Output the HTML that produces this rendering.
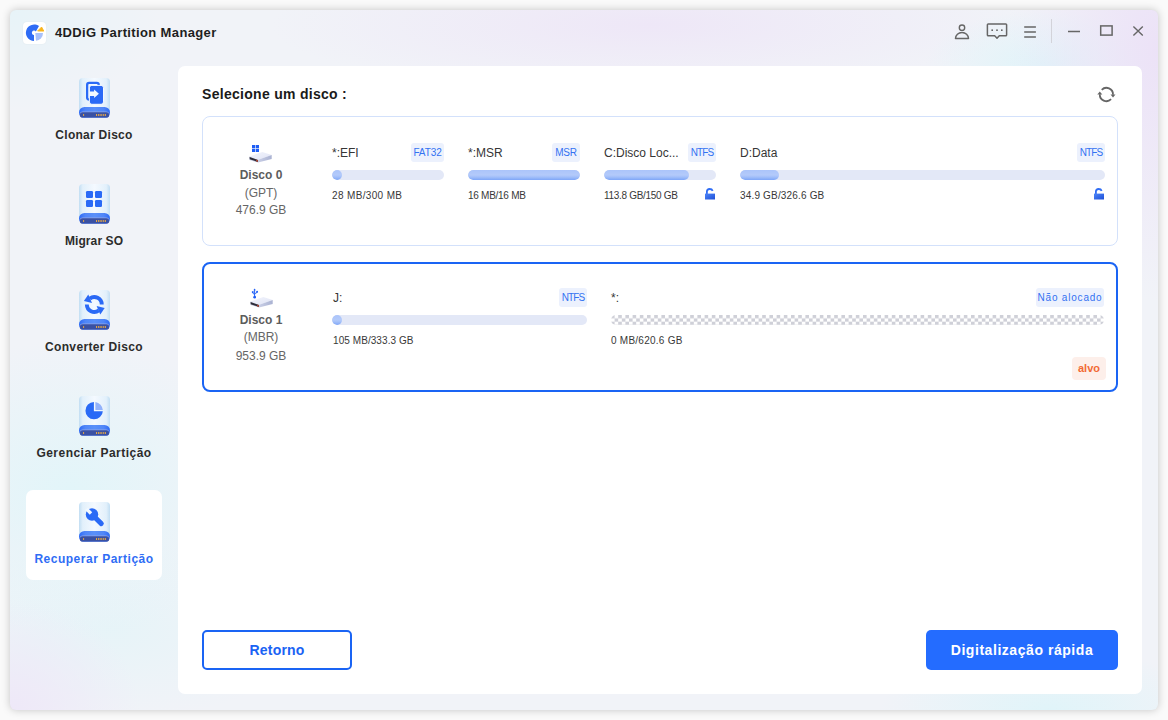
<!DOCTYPE html>
<html><head><meta charset="utf-8">
<style>
*{box-sizing:border-box;margin:0;padding:0}
html,body{width:1168px;height:720px;overflow:hidden;background:#fafafa;font-family:"Liberation Sans",sans-serif;}
.abs{position:absolute}
svg{position:absolute;overflow:visible}
.win{position:absolute;left:10px;top:10px;width:1148px;height:700px;border-radius:6px;
 box-shadow:0 0 9px rgba(0,0,0,.22);overflow:hidden;
 background:
  radial-gradient(ellipse 150px 250px at 1148px 40px,rgba(236,226,247,1),rgba(236,226,247,0)),
  radial-gradient(ellipse 120px 55px at 1035px 55px,rgba(224,244,249,1),rgba(224,244,249,0)),
  radial-gradient(ellipse 380px 70px at 640px 15px,rgba(238,231,247,1),rgba(238,231,247,0)),
  radial-gradient(ellipse 170px 60px at 1040px 700px,rgba(224,244,249,1),rgba(224,244,249,0)),
  radial-gradient(ellipse 130px 110px at 0px 700px,rgba(238,232,248,1),rgba(238,232,248,0)),
  radial-gradient(ellipse 200px 150px at 60px 480px,rgba(226,245,249,1),rgba(226,245,249,0)),
  radial-gradient(ellipse 200px 90px at 100px 620px,rgba(228,244,248,.8),rgba(228,244,248,0)),
  radial-gradient(ellipse 150px 100px at 0px 0px,rgba(230,243,248,.9),rgba(230,243,248,0)),
  #f1f3f8}
.panel{position:absolute;left:168px;top:56px;width:964px;height:628px;background:#fff;border-radius:7px}
.t{position:absolute;white-space:nowrap;line-height:1}
.navlbl{position:absolute;left:0;width:168px;text-align:center;font-weight:bold;font-size:12px;color:#2c2c2c;white-space:nowrap;line-height:1}
.nicon{position:absolute;left:69px;width:31px;height:40px}
.card{position:absolute;left:24px;width:916px;border-radius:8px;background:#fff}
.badge{position:absolute;height:19px;border-radius:3px;background:#ecf1fd;color:#3372f2;font-size:10px;line-height:19px;text-align:center;white-space:nowrap}
.bar{position:absolute;height:10px;border-radius:5px;background:#e3e8f7;overflow:hidden}
.fill{position:absolute;left:0;top:0;height:10px;border-radius:5px;background:linear-gradient(180deg,#abc4fa 0%,#b3cafa 50%,#a2bff9 70%,#7ea6f8 100%)}
.pname{position:absolute;font-size:12px;color:#363636;white-space:nowrap;line-height:1}
.psize{position:absolute;font-size:10px;color:#383838;white-space:nowrap;line-height:1}
.dname{position:absolute;left:33px;width:100px;text-align:center;font-size:12px;font-weight:bold;color:#5c5c5c;line-height:1;white-space:nowrap}
.dsub{position:absolute;left:33px;width:100px;text-align:center;font-size:12px;color:#666;line-height:1;white-space:nowrap}
.chk{position:absolute;height:10px;overflow:hidden;border-radius:5px;background:#fff}
</style></head>
<body>
<svg width="0" height="0" style="position:absolute">
 <defs>
  <linearGradient id="ib" x1="0" x2="1" y1="0" y2="0">
   <stop offset="0" stop-color="#c2def3"/>
   <stop offset=".12" stop-color="#e2f0fb"/>
   <stop offset=".5" stop-color="#f4f9ff"/>
   <stop offset=".88" stop-color="#e2f0fb"/>
   <stop offset="1" stop-color="#c2def3"/>
  </linearGradient>
  <linearGradient id="band" x1="0" x2="1" y1="0" y2="0">
   <stop offset="0" stop-color="#2c69f5"/>
   <stop offset=".2" stop-color="#4f86f8"/>
   <stop offset=".5" stop-color="#5a90f9"/>
   <stop offset=".8" stop-color="#4f86f8"/>
   <stop offset="1" stop-color="#2c69f5"/>
  </linearGradient>
  <symbol id="base" viewBox="0 0 31 40">
   <path d="M0 4 Q0 0 4 0 H27 Q31 0 31 4 V34 H0Z" fill="url(#ib)"/>
   <rect x="0" y="29" width="31" height="11" rx="5.5" fill="url(#band)"/>
   <rect x="0.8" y="33.6" width="29.4" height="6" rx="3" fill="#8fa5e8"/>
   <rect x="0.9" y="34.2" width="29.2" height="5.4" rx="2.7" fill="#3a51a3"/>
   <rect x="4.1" y="36" width="1" height="2" fill="#e2a548"/>
   <rect x="17" y="36" width="1" height="2" fill="#e2a548"/>
   <rect x="18.9" y="36" width="1" height="2" fill="#e2a548"/>
   <rect x="20.6" y="36" width="1" height="2" fill="#e2a548"/>
   <rect x="22.3" y="36" width="1" height="2" fill="#e2a548"/>
   <rect x="24.2" y="36" width="1" height="2" fill="#e2a548"/>
   <rect x="25.9" y="36" width="1" height="2" fill="#e2a548"/>
  </symbol>
  <linearGradient id="drtop" x1="0" x2="1" y1="0" y2="1">
   <stop offset="0" stop-color="#f3f5fc"/>
   <stop offset="1" stop-color="#dfe3f5"/>
  </linearGradient>
  <linearGradient id="drside" x1="0" x2="1" y1="0" y2="0">
   <stop offset="0" stop-color="#c9cfe6"/>
   <stop offset="1" stop-color="#aab2d2"/>
  </linearGradient>
  <symbol id="drive" viewBox="0 0 23 12">
   <path d="M0.3 4.5 L13.3 0 L22.7 3 L9 7.8 Z" fill="url(#drtop)"/>
   <path d="M0.3 4.5 L9 7.8 L9 10.5 L0.5 7.9 Z" fill="#c9cde3"/>
   <path d="M0.6 5 L9 8.1 L9 9.9 L0.7 7.3 Z" fill="#2b2b38"/>
   <path d="M9 7.8 L22.7 3 L22.7 7 L9 10.5 Z" fill="url(#drside)"/>
   <path d="M7 7.6 L9 8.3 L9 9.9 L7 9.2Z" fill="#a54634"/>
  </symbol>
  <linearGradient id="lockg" x1="0" x2="1" y1="0" y2="1">
   <stop offset="0" stop-color="#4f86f7"/>
   <stop offset="1" stop-color="#1d4fd8"/>
  </linearGradient>
  <symbol id="lock" viewBox="0 0 10 12">
   <path d="M1.9 6 V3.4 Q1.9 1 4.6 1 Q6.9 1 7.7 2.9" fill="none" stroke="#2f6df5" stroke-width="1.8"/>
   <rect x="0" y="5.6" width="10" height="5.9" fill="url(#lockg)"/>
  </symbol>
 </defs>
</svg>
<div class="win">
 <!-- logo -->
 <div class="abs" style="left:13px;top:12px;width:23px;height:22px;background:#fff;border-radius:4px;box-shadow:0 0 1.5px rgba(0,0,0,.07)"></div>
 <svg style="left:13px;top:12px" width="23" height="22" viewBox="0 0 23 22">
  <path d="M16 4.1 A8.25 8.25 0 1 0 11 19 L11 13 A2.2 2.2 0 1 1 12.9 9.6 Z" fill="#2f6cf5"/>
  <path d="M12.3 11 H20 A7.6 7.6 0 0 1 13 18.7 Z" fill="#a8c1fb"/>
  <path d="M18.6 5 L14.6 9 L20.8 9.1 Z" fill="#f9b51c" stroke="#f9b51c" stroke-width="0.9" stroke-linejoin="round"/>
 </svg>
 <div class="t" style="left:45px;top:15.6px;font-size:13px;font-weight:bold;color:#1e1e1e;letter-spacing:.37px">4DDiG Partition Manager</div>

 <!-- title bar icons -->
 <svg style="left:940px;top:10px" width="30" height="32" viewBox="0 0 30 32">
  <circle cx="12" cy="7.7" r="2.7" fill="none" stroke="#666" stroke-width="1.4"/>
  <path d="M5.5 18.5 A6.5 6 0 0 1 18.5 18.5 Z" fill="none" stroke="#666" stroke-width="1.5" stroke-linejoin="round"/>
 </svg>
 <svg style="left:970px;top:10px" width="40" height="32" viewBox="0 0 40 32">
  <path d="M8.2 4 H25.8 Q26.6 4 26.6 4.8 V15 Q26.6 15.8 25.8 15.8 H19.3 L17 18.2 L14.7 15.8 H8.2 Q7.4 15.8 7.4 15 V4.8 Q7.4 4 8.2 4Z" fill="none" stroke="#666" stroke-width="1.5" stroke-linejoin="round"/>
  <rect x="11.4" y="9.4" width="1.6" height="1.6" fill="#666"/>
  <rect x="16.2" y="9.4" width="1.6" height="1.6" fill="#666"/>
  <rect x="21" y="9.4" width="1.6" height="1.6" fill="#666"/>
 </svg>
 <svg style="left:1010px;top:10px" width="30" height="32" viewBox="0 0 30 32">
  <path d="M4.2 7 H15.9 M4.2 12 H15.9 M4.2 17 H15.9" stroke="#666" stroke-width="1.5"/>
 </svg>
 <div class="abs" style="left:1041px;top:9px;width:1px;height:24px;background:#d3d3da"></div>
 <svg style="left:1050px;top:10px" width="100" height="32" viewBox="0 0 100 32">
  <path d="M8 11.5 H20" stroke="#666" stroke-width="1.4"/>
  <rect x="40.7" y="5.9" width="11.4" height="9.2" fill="none" stroke="#666" stroke-width="1.5"/>
  <path d="M73.4 6.4 L82.8 15.6 M82.8 6.4 L73.4 15.6" stroke="#666" stroke-width="1.4"/>
 </svg>

 <!-- sidebar -->
 <div class="abs" style="left:16px;top:480px;width:136px;height:90px;background:#fff;border-radius:7px"></div>
 <svg class="nicon" style="top:68px" viewBox="0 0 31 40"><use href="#base"/>
  <rect x="8.15" y="4.9" width="11.6" height="16.65" rx="2" fill="#f3f9ff" stroke="#2a6af6" stroke-width="2.3"/>
  <rect x="10.4" y="7.4" width="14.1" height="18.9" rx="2.4" fill="#2a6af6" stroke="#f3f9ff" stroke-width="1"/>
  <path d="M10.3 13.5 H15.1 V11.6 L19.9 15.8 L15.1 20 V18.1 H10.3Z" fill="#f3f9ff"/>
 </svg>
 <div class="navlbl" style="top:118.6px;letter-spacing:.27px">Clonar Disco</div>

 <svg class="nicon" style="top:174px" viewBox="0 0 31 40"><use href="#base"/>
  <rect x="7" y="7" width="7" height="7" rx="1.2" fill="#2a6af6"/>
  <rect x="16" y="7" width="7" height="7" rx="1.2" fill="#2a6af6"/>
  <rect x="7" y="16" width="7" height="7" rx="1.2" fill="#2a6af6"/>
  <rect x="16" y="16" width="7" height="7" rx="1.2" fill="#2a6af6"/>
 </svg>
 <div class="navlbl" style="top:224.6px;letter-spacing:.1px">Migrar SO</div>

 <svg class="nicon" style="top:280px" viewBox="0 0 31 40"><use href="#base"/>
  <path d="M22.75 14.5 A7.45 7.45 0 0 0 10.8 8.6" fill="none" stroke="#2a6af6" stroke-width="3.9"/>
  <path d="M7.85 14.5 A7.45 7.45 0 0 0 19.8 20.4" fill="none" stroke="#2a6af6" stroke-width="3.9"/>
  <path d="M9.3 4.5 L4.9 11 L13 12.9Z" fill="#2a6af6"/>
  <path d="M21.3 24.5 L25.7 18 L17.6 16.1Z" fill="#2a6af6"/>
 </svg>
 <div class="navlbl" style="top:330.6px;letter-spacing:.36px">Converter Disco</div>

 <svg class="nicon" style="top:386px" viewBox="0 0 31 40"><use href="#base"/>
  <path d="M14.9 5.95 V15.2 H23.83 A8.7 8.7 0 1 1 14.9 5.95Z" fill="#2a6af6"/>
  <path d="M16.4 6.04 V13.9 H23.82 A8.7 8.7 0 0 0 16.4 6.04Z" fill="#92b2fb"/>
 </svg>
 <div class="navlbl" style="top:436.6px;letter-spacing:.47px">Gerenciar Partição</div>

 <svg class="nicon" style="top:492px" viewBox="0 0 31 40"><use href="#base"/>
  <circle cx="13" cy="12.5" r="6.2" fill="#2a6af6"/>
  <path d="M13.5 13 L22.3 21.6" stroke="#2a6af6" stroke-width="5" stroke-linecap="round"/>
  <rect x="-1.7" y="-8" width="3.4" height="6.6" fill="#f1f8ff" transform="translate(13 12.5) rotate(-45)"/>
 </svg>
 <div class="navlbl" style="top:542.6px;color:#2f6df5;letter-spacing:.51px">Recuperar Partição</div>

 <div class="panel">
  <div class="t" style="left:24px;top:21.15px;font-size:14px;font-weight:bold;color:#1a1a1a;letter-spacing:.29px">Selecione um disco :</div>
  <svg style="left:918px;top:18px" width="20" height="20" viewBox="0 0 20 20">
   <path d="M5.73 5.83 A6.6 6.6 0 0 1 17 10.8" fill="none" stroke="#666" stroke-width="1.8"/>
   <path d="M15.07 15.17 A6.6 6.6 0 0 1 3.8 10.2" fill="none" stroke="#666" stroke-width="1.8"/>
   <path d="M14.5 10.6 L19.5 10.6 L17 13.6Z" fill="#666"/>
   <path d="M1.3 10.4 L6.3 10.4 L3.8 7.4Z" fill="#666"/>
  </svg>

  <!-- Disk 0 -->
  <div class="card" style="top:50px;height:130px;border:1px solid #d3e1fb"></div>
  <svg style="left:74px;top:79px" width="7" height="7" viewBox="0 0 7 7">
   <rect x="0" y="0" width="3.2" height="3.2" fill="#1f5ef5"/><rect x="3.8" y="0" width="3.2" height="3.2" fill="#1f5ef5"/>
   <rect x="0" y="3.8" width="3.2" height="3.2" fill="#1f5ef5"/><rect x="3.8" y="3.8" width="3.2" height="3.2" fill="#1f5ef5"/>
  </svg>
  <svg style="left:71px;top:85.5px" width="23" height="12" viewBox="0 0 23 12"><use href="#drive"/></svg>
  <div class="dname" style="top:102.8px">Disco 0</div>
  <div class="dsub" style="top:120.6px">(GPT)</div>
  <div class="dsub" style="top:138.4px">476.9 GB</div>

  <div class="pname" style="left:154px;top:80.7px">*:EFI</div>
  <div class="badge" style="left:233px;top:77px;width:33px;letter-spacing:-.1px">FAT32</div>
  <div class="bar" style="left:154px;top:104px;width:112px"><div class="fill" style="width:10px"></div></div>
  <div class="psize" style="left:154px;top:124.5px;letter-spacing:.35px">28 MB/300 MB</div>

  <div class="pname" style="left:290px;top:80.7px">*:MSR</div>
  <div class="badge" style="left:374px;top:77px;width:28px;letter-spacing:-.3px">MSR</div>
  <div class="bar" style="left:290px;top:104px;width:112px"><div class="fill" style="width:112px"></div></div>
  <div class="psize" style="left:290px;top:124.5px;letter-spacing:-.27px">16 MB/16 MB</div>

  <div class="pname" style="left:426px;top:80.7px">C:Disco Loc...</div>
  <div class="badge" style="left:510px;top:77px;width:28px;letter-spacing:-.9px">NTFS</div>
  <div class="bar" style="left:426px;top:104px;width:112px"><div class="fill" style="width:85px"></div></div>
  <div class="psize" style="left:426px;top:124.5px;letter-spacing:-.3px">113.8 GB/150 GB</div>
  <svg style="left:527px;top:122.4px" width="10" height="12" viewBox="0 0 10 12"><use href="#lock"/></svg>

  <div class="pname" style="left:562px;top:80.7px">D:Data</div>
  <div class="badge" style="left:899px;top:77px;width:28px;letter-spacing:-.9px">NTFS</div>
  <div class="bar" style="left:562px;top:104px;width:365px"><div class="fill" style="width:39px"></div></div>
  <div class="psize" style="left:562px;top:124.5px;letter-spacing:.17px">34.9 GB/326.6 GB</div>
  <svg style="left:916px;top:122.4px" width="10" height="12" viewBox="0 0 10 12"><use href="#lock"/></svg>

  <!-- Disk 1 -->
  <div class="card" style="top:196px;height:130px;border:2px solid #1a64f4"></div>
  <svg style="left:74px;top:221.5px" width="7" height="10" viewBox="0 0 7 10">
   <path d="M2.6 1.8 V9 M2.6 6.6 L0.7 5.1 V4.2 M2.6 5.8 L5.1 4.4 V3.9" fill="none" stroke="#1f5ef5" stroke-width="0.95"/>
   <circle cx="2.65" cy="9.2" r="1.35" fill="#1f5ef5"/>
   <path d="M1.3 2.3 L2.6 0.6 L3.9 2.3Z" fill="#1f5ef5"/>
   <rect x="-0.1" y="3.2" width="1.7" height="1.7" fill="#1f5ef5"/>
   <circle cx="5.1" cy="3.7" r="0.95" fill="#1f5ef5"/>
  </svg>
  <svg style="left:72px;top:230.5px" width="23" height="12" viewBox="0 0 23 12"><use href="#drive"/></svg>
  <div class="dname" style="top:247.5px">Disco 1</div>
  <div class="dsub" style="top:265.3px">(MBR)</div>
  <div class="dsub" style="top:283.6px">953.9 GB</div>

  <div class="pname" style="left:155px;top:225.7px">J:</div>
  <div class="badge" style="left:381px;top:222px;width:28px;letter-spacing:-.9px">NTFS</div>
  <div class="bar" style="left:154px;top:249px;width:255px"><div class="fill" style="width:10px"></div></div>
  <div class="psize" style="left:155px;top:269.5px;letter-spacing:.07px">105 MB/333.3 GB</div>

  <div class="pname" style="left:433px;top:225.7px">*:</div>
  <div class="badge" style="left:858px;top:222px;width:68px;font-size:10px;letter-spacing:.8px">Não alocado</div>
  <div class="chk" style="left:433px;top:249px;width:493px"><svg style="left:0;top:0" width="493" height="10"><defs><pattern id="cp" width="7.2" height="6.667" patternUnits="userSpaceOnUse"><rect x="0" y="0" width="3.6" height="3.333" fill="#cfd0d8"/><rect x="3.6" y="3.333" width="3.6" height="3.333" fill="#cfd0d8"/></pattern></defs><rect width="493" height="10" fill="url(#cp)"/></svg></div>
  <div class="psize" style="left:433px;top:269.5px;letter-spacing:.25px">0 MB/620.6 GB</div>
  <div class="badge" style="left:894px;top:291px;width:34px;height:23px;line-height:23px;border-radius:4px;background:#fdefea;color:#f26a35;font-weight:bold;font-size:11px">alvo</div>

  <div class="abs" style="left:24px;top:564px;width:150px;height:40px;border:2px solid #1a64f4;border-radius:5px;color:#1a63f4;font-weight:bold;font-size:14px;line-height:36px;text-align:center;letter-spacing:.2px">Retorno</div>
  <div class="abs" style="left:748px;top:564px;width:192px;height:40px;background:#246cff;border-radius:5px;color:#fff;font-weight:bold;font-size:14px;line-height:40px;text-align:center;letter-spacing:.55px">Digitalização rápida</div>
 </div>
</div>
</body></html>
